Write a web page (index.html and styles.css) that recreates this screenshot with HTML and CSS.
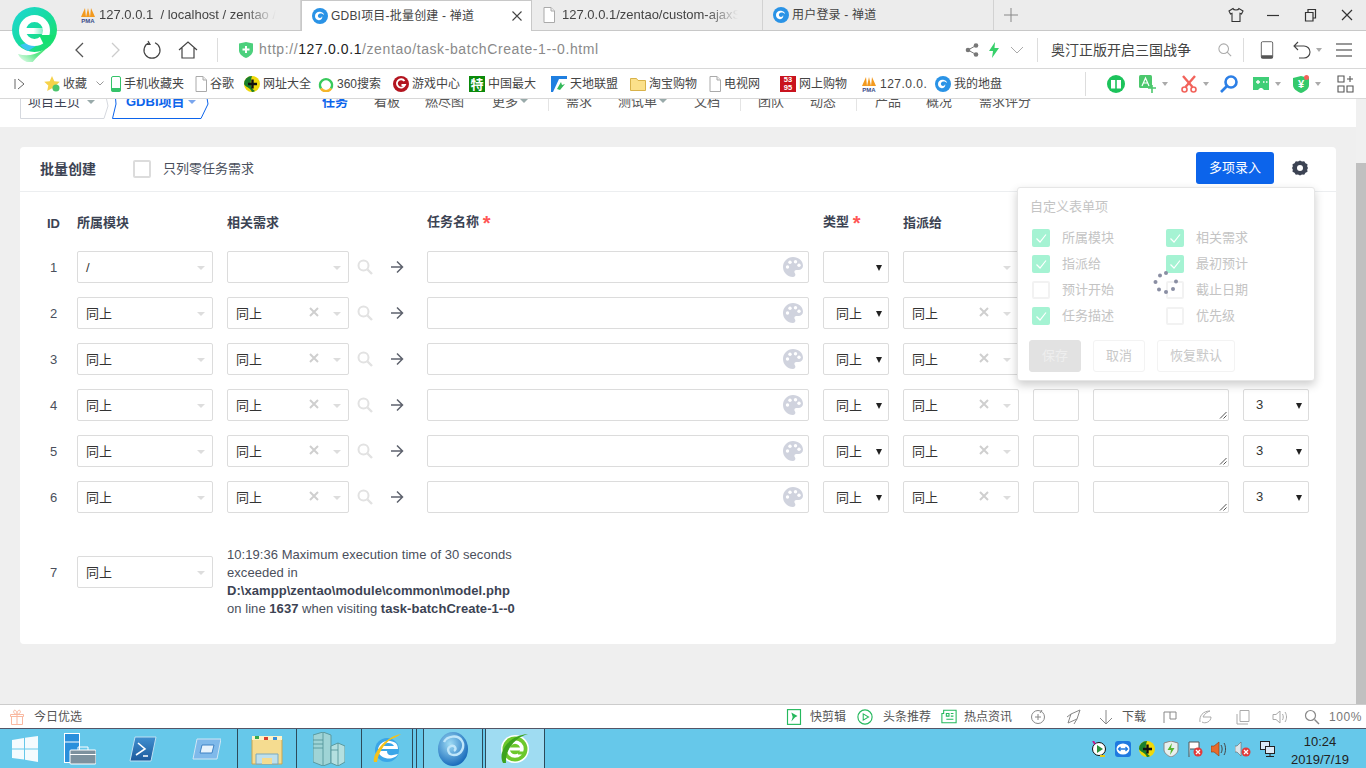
FILE: index.html
```html
<!DOCTYPE html>
<html lang="zh-CN">
<head>
<meta charset="utf-8">
<title>GDBI项目-批量创建 - 禅道</title>
<link rel="stylesheet" href="styles.css">
</head>
<body>
<svg class="defs" width="0" height="0" aria-hidden="true">
  <defs>
    <linearGradient id="gLogo" x1="0" y1="0" x2="1" y2="1"><stop offset="0" stop-color="#1fd6d8"/><stop offset=".5" stop-color="#16dca0"/><stop offset="1" stop-color="#1fe05a"/></linearGradient>
    <linearGradient id="gTail" x1="1" y1="0" x2="0" y2="1"><stop offset="0" stop-color="#1fe05a"/><stop offset=".6" stop-color="#5fe88a"/><stop offset="1" stop-color="#5fe88a" stop-opacity="0"/></linearGradient>
    <linearGradient id="gBar" x1="0" y1="0" x2="1" y2="0"><stop offset="0" stop-color="#fff"/><stop offset=".35" stop-color="#fff"/><stop offset="1" stop-color="#fff" stop-opacity="0"/></linearGradient>
    <radialGradient id="gOrb" cx=".4" cy=".35" r=".7"><stop offset="0" stop-color="#9fdcf5"/><stop offset="1" stop-color="#1165b8"/></radialGradient>
    <linearGradient id="gPs" x1="0" y1="0" x2="0" y2="1"><stop offset="0" stop-color="#3f8fd0"/><stop offset="1" stop-color="#1d5a9c"/></linearGradient>
    <symbol id="swirl" viewBox="0 0 16 16"><circle cx="8" cy="8" r="8" fill="#2a93e6"/><path d="M3 8c0-3 3-5 6-4 2 .6 3 2 3 3-1-1-3-2-5-1-2 1-1 4 1 4 1 0 2-1 2-2 1 2-1 5-4 4-2-.5-3-2-3-4z" fill="#fff"/></symbol>
    <symbol id="pma" viewBox="0 0 16 16"><path d="M1 10 5 1l1 9zM6 10l2-9 2 9zM10 10 11 1l4 9z" fill="#f39a1f"/><text x="8" y="15.5" text-anchor="middle" class="pmat">PMA</text></symbol>
    <symbol id="doc" viewBox="0 0 12 16"><path d="M1 .5h7l3.500 3.500v11.500h-10.500z" fill="#fff" stroke="#aaa"/><path d="M8 .5v3.500h3.500" fill="#eee" stroke="#aaa"/></symbol>
    <symbol id="palette" viewBox="0 0 20 20"><path d="M10 0C4.500 0 0 4.500 0 10s4.500 10 10 10c1.500 0 2.400-1 2.400-2.200 0-1.400-1-1.700-1-2.900 0-1 .8-1.800 1.800-1.800h2.300c2.500 0 4.500-2 4.500-4.300C20 3.700 15.500 0 10 0z" fill="#d0d3de"/><circle cx="4.500" cy="10" r="1.700" fill="#fff"/><circle cx="7" cy="5.300" r="1.700" fill="#fff"/><circle cx="12.500" cy="4.700" r="1.700" fill="#fff"/><circle cx="16" cy="8.300" r="1.700" fill="#fff"/></symbol>
    <symbol id="mag" viewBox="0 0 16 16"><circle cx="6.500" cy="6.500" r="5" fill="none" stroke="currentColor" stroke-width="2"/><path d="M10.500 10.500 15 15" stroke="currentColor" stroke-width="2.400"/></symbol>
    <symbol id="arrow" viewBox="0 0 14 14"><path d="M1 7h11.500M7 1.500 12.500 7 7 12.500" fill="none" stroke="#5e626d" stroke-width="1.500"/></symbol>
    <symbol id="check" viewBox="0 0 18 18"><path d="M4.500 9.500 8 13l6-7.500" fill="none" stroke="#fff" stroke-width="1.200"/></symbol>
    <symbol id="xmark" viewBox="0 0 10 10"><path d="M1 1l8 8M9 1l-8 8" stroke="#cfcfcf" stroke-width="2"/></symbol>
  </defs>
</svg>

<svg class="logo" viewBox="0 0 45 55" width="45" height="55" aria-hidden="true">
  <path d="M42 30C38 42 28 45 20 56 14 56 8 52 6 47c14 4 28-2 36-17z" fill="url(#gTail)"/>
  <circle cx="22.500" cy="22.500" r="22.500" fill="url(#gLogo)"/>
  <path d="M8 38a22 22 0 0 0 8 6l8-5-10-3z" fill="#3dc6f2"/>
  <circle cx="22.500" cy="23.500" r="12" fill="none" stroke="#fff" stroke-width="7"/>
  <rect x="12" y="21" width="27" height="6" fill="url(#gBar)"/>
  <path d="M27 28h15v5l-10 5z" fill="#14df72"/>
</svg>

<header class="tabbar">
  <div class="tab">
    <svg class="ic16"><use href="#pma"/></svg><span class="tab-title fade">127.0.0.1 &nbsp;/ localhost / zentao /</span>
  </div>
  <div class="tab tab-on">
    <svg class="ic16"><use href="#swirl"/></svg><span class="tab-title cjk">GDBI项目-批量创建 - 禅道</span>
    <svg class="tab-x" viewBox="0 0 10 10" width="10" height="10"><path d="M.5.500l9 9M9.500.500l-9 9" stroke="#444" stroke-width="1.100"/></svg>
  </div>
  <div class="tab">
    <svg class="ic-doc"><use href="#doc"/></svg><span class="tab-title fade">127.0.0.1/zentao/custom-ajaxSave</span>
  </div>
  <div class="tab">
    <svg class="ic16"><use href="#swirl"/></svg><span class="tab-title cjk">用户登录 - 禅道</span>
  </div>
  <svg class="tab-plus" viewBox="0 0 14 14" width="14" height="14"><path d="M7 0v14M0 7h14" stroke="#888"/></svg>
  <div class="winctl">
    <svg viewBox="0 0 16 16" width="16" height="16"><path d="M5 1.500 1 4l1.500 3L4 6.300V14.500h8V6.300L13.500 7 15 4l-4-2.500c-.5 2-5.500 2-6 0z" fill="none" stroke="#333" stroke-width="1.100"/></svg>
    <svg viewBox="0 0 16 16" width="16" height="16"><path d="M2 8.500h12" stroke="#333" stroke-width="1.200"/></svg>
    <svg viewBox="0 0 16 16" width="16" height="16"><path d="M3.500 5.500h7.500v8.500h-7.500zM6 5.500V2.500h7.500v8.500H11" fill="none" stroke="#333" stroke-width="1.200"/></svg>
    <svg viewBox="0 0 16 16" width="16" height="16"><path d="M3 3l10 10M13 3L3 13" stroke="#333" stroke-width="1.200"/></svg>
  </div>
</header>

<nav class="toolbar">
  <svg class="tool" viewBox="0 0 16 16" width="16" height="16"><path d="M11 1 4 8l7 7" fill="none" stroke="#555" stroke-width="1.300"/></svg>
  <svg class="tool" viewBox="0 0 16 16" width="16" height="16"><path d="M5 1l7 7-7 7" fill="none" stroke="#ccc" stroke-width="1.300"/></svg>
  <svg class="tool" viewBox="0 0 20 20" width="20" height="20"><path d="M7 2.800A8 8 0 1 0 13 2.800M6 1l2 3.500H3.500" fill="none" stroke="#444" stroke-width="1.200"/></svg>
  <svg class="tool" viewBox="0 0 20 20" width="20" height="20"><path d="M1 10 10 2l9 8M4 8v10h12V8" fill="none" stroke="#444" stroke-width="1.200"/></svg>
  <i class="vline"></i>
  <svg class="tool" viewBox="0 0 14 16" width="14" height="16"><path d="M0 1.500 7 0l7 1.500v7C14 12 10 15 7 16 4 15 0 12 0 8.500z" fill="#4cd07d"/><path d="M7 4v7M3.500 7.500h7" stroke="#fff" stroke-width="2"/></svg>
  <div class="url">http://<b>127.0.0.1</b>/zentao/task-batchCreate-1--0.html</div>
  <svg class="tool" viewBox="0 0 14 14" width="14" height="14"><circle cx="11" cy="2.500" r="2.300" fill="#777"/><circle cx="3" cy="7" r="2.300" fill="#777"/><circle cx="11" cy="11.500" r="2.300" fill="#777"/><path d="M11 2.500 3 7l8 4.500" fill="none" stroke="#777"/></svg>
  <svg class="tool" viewBox="0 0 10 16" width="10" height="16"><path d="M6 0 0 9h4l-1 7 7-10H5.500z" fill="#37d06a"/></svg>
  <svg class="tool" viewBox="0 0 14 8" width="14" height="8"><path d="M1 1l6 6 6-6" fill="none" stroke="#aaa"/></svg>
  <i class="vline"></i>
  <div class="searchtext">奥汀正版开启三国战争</div>
  <svg class="tool mag-grey" viewBox="0 0 16 16" width="14" height="14"><circle cx="6.500" cy="6.500" r="5.500" fill="none" stroke="#aaa" stroke-width="1.200"/><path d="M10.500 10.500 15 15" stroke="#aaa" stroke-width="1.200"/></svg>
  <i class="vline"></i>
  <svg class="tool" viewBox="0 0 16 20" width="14" height="20"><rect x="1.500" y=".5" width="13" height="19" rx="1.500" fill="none" stroke="#555"/><rect x="1.500" y="16" width="13" height="3.500" fill="#555"/></svg>
  <svg class="tool" viewBox="0 0 18 18" width="18" height="18"><path d="M5 1 1 5l4 4M1 5h10a5.500 5.500 0 0 1 0 12H6" fill="none" stroke="#444" stroke-width="1.100"/></svg>
  <svg class="tool" viewBox="0 0 6 4" width="6" height="4"><path d="M0 0h6L3 4z" fill="#aaa"/></svg>
  <svg class="tool" viewBox="0 0 16 14" width="16" height="14"><path d="M0 1h16M0 7h16M0 13h16" stroke="#333" stroke-width="1.200"/></svg>
</nav>

<nav class="bookmarks">
  <svg class="tog" viewBox="0 0 12 12" width="12" height="12"><path d="M1 1v10M4 1l6 5-6 5" fill="none" stroke="#666"/></svg>
  <a class="bm"><svg class="ic16" viewBox="0 0 16 16"><path d="M8 0l2.300 5.200 5.500.6-4.100 3.800 1.100 5.500L8 12.300 3.200 15l1.100-5.500L.2 5.800l5.500-.6z" fill="#f6d24a"/><circle cx="12" cy="12" r="3.500" fill="#4cc56d"/></svg><span>收藏</span><svg class="chev" viewBox="0 0 8 5" width="8" height="5"><path d="M.5.500 4 4 7.500.500" fill="none" stroke="#999"/></svg></a>
  <a class="bm"><svg class="ic-phone" viewBox="0 0 10 16"><rect x=".5" y=".5" width="9" height="15" rx="1.500" fill="#fff" stroke="#35c36a"/><rect x=".5" y="12" width="9" height="3.500" fill="#35c36a"/></svg><span>手机收藏夹</span></a>
  <a class="bm"><svg class="ic-doc"><use href="#doc"/></svg><span>谷歌</span></a>
  <a class="bm"><svg class="ic16" viewBox="0 0 16 16"><circle cx="8" cy="8" r="8" fill="#f0d90a"/><path d="M8 0a8 8 0 0 0-8 8c2 4 5 2 8 8a8 8 0 0 0 3-1C6 12 6 6 8 0z" fill="#1a7f2c"/><path d="M8.500 3.500v9M4 8h9" stroke="#111" stroke-width="2.400"/></svg><span>网址大全</span></a>
  <a class="bm"><svg class="ic16" viewBox="0 0 16 16"><path d="M13 12.500A6 6 0 1 0 3 12.500" fill="none" stroke="#38c95b" stroke-width="2.500"/><path d="M3 12.500a6 6 0 0 0 10 0" fill="none" stroke="#f5b52a" stroke-width="2.500"/></svg><span>360搜索</span></a>
  <a class="bm"><svg class="ic16" viewBox="0 0 16 16"><circle cx="8" cy="8" r="8" fill="#b3141f"/><path d="M11.500 5A4.200 4.200 0 1 0 12 9H8.500" fill="none" stroke="#fff" stroke-width="1.800"/></svg><span>游戏中心</span></a>
  <a class="bm"><b class="ic-te">特</b><span>中国最大</span></a>
  <a class="bm"><svg class="ic16" viewBox="0 0 16 16"><rect width="16" height="16" fill="#1f7fe0"/><path d="M8 3h8v13H2z" fill="#fff"/><path d="M6 13l4-7 1 3 3-1-5 6z" fill="#35b85a"/></svg><span>天地联盟</span></a>
  <a class="bm"><svg class="ic16" viewBox="0 0 16 16"><path d="M.5 2.500h6l1.500 2h7.500v10H.5z" fill="#fbe08a" stroke="#d8b24a"/></svg><span>淘宝购物</span></a>
  <a class="bm"><svg class="ic-doc"><use href="#doc"/></svg><span>电视网</span></a>
  <a class="bm"><b class="ic-53">53<br>95</b><span>网上购物</span></a>
  <a class="bm"><svg class="ic16"><use href="#pma"/></svg><span class="lat">127.0.0.</span></a>
  <a class="bm"><svg class="ic16"><use href="#swirl"/></svg><span>我的地盘</span></a>
  <i class="vline"></i>
  <svg class="ic18" viewBox="0 0 18 18"><circle cx="9" cy="9" r="9" fill="#1cc35b"/><path d="M4 5h4.200v8.500H4zM9.800 5H14v8.500H9.800z" fill="#fff"/></svg>
  <div class="ext"><svg class="ic18" viewBox="0 0 18 18"><rect width="13" height="13" rx="1.500" fill="#4cc86d"/><path d="M3 11 6.500 3 10 11M4.500 8h4" fill="none" stroke="#fff" stroke-width="1.200"/><path d="M9 13h8M13 10v8" stroke="#4cc86d" stroke-width="1.600"/></svg><i class="mini"></i></div>
  <div class="ext"><svg class="ic18" viewBox="0 0 18 18"><path d="M3 1l9.500 11M15 1 5.500 12" stroke="#f2635b" stroke-width="2.400"/><circle cx="4.500" cy="14.500" r="2.500" fill="none" stroke="#f2635b" stroke-width="1.600"/><circle cx="13.500" cy="14.500" r="2.500" fill="none" stroke="#f2635b" stroke-width="1.600"/></svg><i class="mini"></i></div>
  <svg class="ic18" viewBox="0 0 18 18"><circle cx="11" cy="7" r="5.500" fill="none" stroke="#2c7fe6" stroke-width="2.600"/><path d="M7 11l-6 6" stroke="#2c7fe6" stroke-width="2.600"/></svg>
  <div class="ext"><svg class="ic18" viewBox="0 0 18 18"><path d="M1 2h16v13h-5l-2-2H8l-2 2H1z" fill="#3fce77"/><path d="M4 7h4M6 5v4M11 7h1.500M14 7h1.500" stroke="#fff" stroke-width="1.300"/></svg><i class="mini"></i></div>
  <div class="ext"><svg class="ic18" viewBox="0 0 18 18"><path d="M1 3l8-2 8 2v7c0 4-4 6.500-8 8-4-1.500-8-4-8-8z" fill="#33c96b"/><text x="9" y="13" text-anchor="middle" class="yen">¥</text><circle cx="14.500" cy="2.500" r="2.500" fill="#f2635b"/></svg><i class="mini"></i></div>
  <svg class="ic18" viewBox="0 0 16 18"><path d="M1 1h6v6H1zM1 11h6v6H1zM10 11h6v6h-6zM13 1v6M10 4h6" fill="none" stroke="#555" stroke-width="1.100"/></svg>
</nav>

<div class="main">
  <div class="page">
    <div class="pnav">
      <div class="crumb"><svg class="crumb-bd" viewBox="0 0 92 27" width="92" height="27"><path d="M.5 0V26.500H84L88 14 85 0" fill="none" stroke="#d5d8de"/></svg><span class="crumb-t">项目主页</span><i class="car"></i></div>
      <div class="crumb crumb-on"><svg class="crumb-bd" viewBox="0 0 98 27" width="98" height="27"><path d="M3 0 4 12 .5 26.500H89L96 12 94 0" fill="none" stroke="#0c64eb"/></svg><span class="crumb-t">GDBI项目</span><i class="car"></i></div>
      <a class="ni ni-on">任务</a><a class="ni">看板</a><a class="ni">燃尽图</a><a class="ni">更多<i class="car"></i></a>
      <i class="ndiv"></i>
      <a class="ni">需求</a><a class="ni">测试单<i class="car"></i></a><a class="ni">文档</a>
      <i class="ndiv"></i>
      <a class="ni">团队</a><a class="ni">动态</a>
      <i class="ndiv"></i>
      <a class="ni">产品</a><a class="ni">概况</a><a class="ni">需求评分</a>
    </div>

    <section class="card">
      <div class="card-head">
        <strong class="ch-title">批量创建</strong>
        <span class="cb"></span>
        <span class="ch-label">只列零任务需求</span>
        <span class="primary">多项录入</span>
        <svg class="gear" viewBox="0 0 16 16" width="16" height="16"><path d="M8 .5l2 1 2.200-.3 1.300 2 2 1-.3 2.300.8 1.500-.8 1.500.3 2.300-2 1-1.300 2-2.200-.3-2 1-2-1-2.200.3-1.300-2-2-1 .3-2.300L0 8l.8-1.500L.5 4.200l2-1 1.300-2 2.200.3z" fill="#3c4353"/><circle cx="8" cy="8" r="3" fill="#fff"/></svg>
      </div>

      <div class="tbl">
        <div class="row row-h">
          <span class="num">ID</span><span>所属模块</span><span>相关需求</span>
          <span class="up">任务名称 <em>*</em></span><span class="up">类型 <em>*</em></span><span>指派给</span>
        </div>

        <div class="row"><span class="num">1</span><div class="sel">/<i class="dn"></i></div><div class="story"><div class="sel sel-s"><i class="dn"></i></div><svg class="ic-m"><use href="#mag"/></svg><svg class="ic-a"><use href="#arrow"/></svg></div><div class="inp"><svg class="ic-p"><use href="#palette"/></svg></div><div class="nat"><i class="blk"></i></div><div class="sel"><i class="dn"></i></div><div class="box"></div><div class="area"></div><div class="nat"><i class="blk"></i></div></div>

        <div class="row"><span class="num">2</span><div class="sel">同上<i class="dn"></i></div><div class="story"><div class="sel sel-s">同上<svg class="x"><use href="#xmark"/></svg><i class="dn"></i></div><svg class="ic-m"><use href="#mag"/></svg><svg class="ic-a"><use href="#arrow"/></svg></div><div class="inp"><svg class="ic-p"><use href="#palette"/></svg></div><div class="nat">同上<i class="blk"></i></div><div class="sel">同上<svg class="x"><use href="#xmark"/></svg><i class="dn"></i></div><div class="box"></div><div class="area"></div><div class="nat nat-n">3<i class="blk"></i></div></div>

        <div class="row"><span class="num">3</span><div class="sel">同上<i class="dn"></i></div><div class="story"><div class="sel sel-s">同上<svg class="x"><use href="#xmark"/></svg><i class="dn"></i></div><svg class="ic-m"><use href="#mag"/></svg><svg class="ic-a"><use href="#arrow"/></svg></div><div class="inp"><svg class="ic-p"><use href="#palette"/></svg></div><div class="nat">同上<i class="blk"></i></div><div class="sel">同上<svg class="x"><use href="#xmark"/></svg><i class="dn"></i></div><div class="box"></div><div class="area"></div><div class="nat nat-n">3<i class="blk"></i></div></div>

        <div class="row"><span class="num">4</span><div class="sel">同上<i class="dn"></i></div><div class="story"><div class="sel sel-s">同上<svg class="x"><use href="#xmark"/></svg><i class="dn"></i></div><svg class="ic-m"><use href="#mag"/></svg><svg class="ic-a"><use href="#arrow"/></svg></div><div class="inp"><svg class="ic-p"><use href="#palette"/></svg></div><div class="nat">同上<i class="blk"></i></div><div class="sel">同上<svg class="x"><use href="#xmark"/></svg><i class="dn"></i></div><div class="box"></div><div class="area"><svg class="grip" viewBox="0 0 8 8" width="8" height="8"><path d="M7.500 1 1 7.500M7.500 4.500l-3 3" stroke="#555"/></svg></div><div class="nat nat-n">3<i class="blk"></i></div></div>

        <div class="row"><span class="num">5</span><div class="sel">同上<i class="dn"></i></div><div class="story"><div class="sel sel-s">同上<svg class="x"><use href="#xmark"/></svg><i class="dn"></i></div><svg class="ic-m"><use href="#mag"/></svg><svg class="ic-a"><use href="#arrow"/></svg></div><div class="inp"><svg class="ic-p"><use href="#palette"/></svg></div><div class="nat">同上<i class="blk"></i></div><div class="sel">同上<svg class="x"><use href="#xmark"/></svg><i class="dn"></i></div><div class="box"></div><div class="area"><svg class="grip" viewBox="0 0 8 8" width="8" height="8"><path d="M7.500 1 1 7.500M7.500 4.500l-3 3" stroke="#555"/></svg></div><div class="nat nat-n">3<i class="blk"></i></div></div>

        <div class="row"><span class="num">6</span><div class="sel">同上<i class="dn"></i></div><div class="story"><div class="sel sel-s">同上<svg class="x"><use href="#xmark"/></svg><i class="dn"></i></div><svg class="ic-m"><use href="#mag"/></svg><svg class="ic-a"><use href="#arrow"/></svg></div><div class="inp"><svg class="ic-p"><use href="#palette"/></svg></div><div class="nat">同上<i class="blk"></i></div><div class="sel">同上<svg class="x"><use href="#xmark"/></svg><i class="dn"></i></div><div class="box"></div><div class="area"><svg class="grip" viewBox="0 0 8 8" width="8" height="8"><path d="M7.500 1 1 7.500M7.500 4.500l-3 3" stroke="#555"/></svg></div><div class="nat nat-n">3<i class="blk"></i></div></div>

        <div class="row row-err">
          <span class="num num-e">7</span><div class="sel sel-e">同上<i class="dn"></i></div>
          <div class="err">10:19:36 Maximum execution time of 30 seconds exceeded in <b>D:\xampp\zentao\module\common\model.php</b><br>on line <b>1637</b> when visiting <b>task-batchCreate-1--0</b></div>
        </div>
      </div>

      <div class="pop">
        <div class="pop-h">自定义表单项</div>
        <div class="pop-g">
          <label class="pi"><span class="pb on"><svg><use href="#check"/></svg></span>所属模块</label>
          <label class="pi"><span class="pb on"><svg><use href="#check"/></svg></span>相关需求</label>
          <label class="pi"><span class="pb on"><svg><use href="#check"/></svg></span>指派给</label>
          <label class="pi"><span class="pb on"><svg><use href="#check"/></svg></span>最初预计</label>
          <label class="pi"><span class="pb"></span>预计开始</label>
          <label class="pi"><span class="pb"></span>截止日期</label>
          <label class="pi"><span class="pb on"><svg><use href="#check"/></svg></span>任务描述</label>
          <label class="pi"><span class="pb"></span>优先级</label>
        </div>
        <div class="pop-b"><span class="pbtn pbtn-s">保存</span><span class="pbtn">取消</span><span class="pbtn">恢复默认</span></div>
        <svg class="spin" viewBox="0 0 26 26" width="26" height="26"><g fill="#8a8ea3"><circle cx="7" cy="4.500" r="2"/><circle cx="13" cy="2" r="2"/><circle cx="2.500" cy="11" r="2"/><circle cx="6" cy="18.500" r="2"/><circle cx="13" cy="21" r="2"/><circle cx="20" cy="18" r="2"/><circle cx="23" cy="10.500" r="2"/></g></svg>
      </div>
    </section>
  </div>
  <div class="sbar"><div class="thumb"></div></div>
</div>

<footer class="status">
  <svg class="ic16" viewBox="0 0 16 16"><path d="M1.500 5.500h13v2h-13zM2.500 7.500v8h11v-8M8 5.500v10M8 5.500C5 5 4 3 5 1.500c1.500-1 3 1 3 4 0-3 1.500-5 3-4 1 1.500 0 3.500-3 4" fill="none" stroke="#f9b8a0"/></svg>
  <span>今日优选</span>
  <svg class="ic-st" viewBox="0 0 16 18"><rect x=".7" y=".7" width="14.600" height="16.600" fill="none" stroke="#25b85d" stroke-width="1.300"/><path d="M5 4l7 4-3 1.500L5 14l1.500-5z" fill="#25b85d"/></svg>
  <span>快剪辑</span>
  <svg class="ic-st" viewBox="0 0 18 18"><circle cx="9" cy="9" r="8" fill="none" stroke="#25b85d" stroke-width="1.300"/><path d="M7 5.500 13 9l-6 3.500z" fill="none" stroke="#25b85d" stroke-width="1.200"/></svg>
  <span>头条推荐</span>
  <svg class="ic-st" viewBox="0 0 18 18"><path d="M3 1.500h14v14H1V5h2zM6 5h3v3H6zM11 5h3M11 8h3M6 11.500h8" fill="none" stroke="#25b85d" stroke-width="1.200"/></svg>
  <span>热点资讯</span>
  <svg class="ic-st" viewBox="0 0 16 16"><circle cx="8" cy="8" r="6.500" fill="none" stroke="#888"/><path d="M8 5v6M5 8h6M12 1l-2 3" stroke="#888"/></svg>
  <svg class="ic-st" viewBox="0 0 16 16"><path d="M14 1 5 5 2 14l9-4zM1 8l4-3M8 15l3-5" fill="none" stroke="#888"/></svg>
  <svg class="ic-st" viewBox="0 0 16 16"><path d="M8 1v14M2 9l6 6 6-6" fill="none" stroke="#888"/></svg>
  <span>下载</span>
  <svg class="ic-st" viewBox="0 0 16 16"><path d="M2 14V3h12v7H8V3" fill="none" stroke="#888"/></svg>
  <svg class="ic-st" viewBox="0 0 16 16"><path d="M3 13C2 7 6 2 13 2c-2 .5-6 3-7 6h8c0 5-6 7-9 5" fill="none" stroke="#aaa"/></svg>
  <svg class="ic-st" viewBox="0 0 16 16"><path d="M5 1.500h9v11H5zM2 5v10h11" fill="none" stroke="#aaa"/></svg>
  <svg class="ic-st" viewBox="0 0 16 16"><path d="M1 5.500h3L8 2v12L4 10.500H1zM10.500 5c1 2 1 4 0 6M13 3c2 3 2 7 0 10" fill="none" stroke="#aaa"/></svg>
  <svg class="ic-st" viewBox="0 0 16 16"><circle cx="6.500" cy="6.500" r="5" fill="none" stroke="#888" stroke-width="1.200"/><path d="M10.500 10.500 15 15" stroke="#888" stroke-width="1.400"/></svg>
  <span class="lat">100%</span>
</footer>

<footer class="taskbar">
  <div class="tb tb-win"><svg viewBox="0 0 26 26" width="26" height="26"><path d="M0 4l12-2v10.500H0zM13 1.700 26 0v12.500H13zM0 13.500h12v10L0 22zM13 13.500h13V26l-13-2.200z" fill="#f4fbfe"/></svg></div>
  <div class="tb tb-a"><svg viewBox="0 0 32 32" width="32" height="32"><rect x=".5" y=".5" width="15" height="29" fill="#2a8fdc" stroke="#fff"/><path d="M0 9h16" stroke="#fff"/><rect x="6" y="17" width="26" height="14" rx="1" fill="#7d919e" stroke="#fff"/><path d="M14 17v-3h10v3M6 21.500h26" fill="none" stroke="#fff"/></svg></div>
  <div class="tb tb-b"><svg viewBox="0 0 28 26" width="28" height="26"><path d="M6 1h21l-5 24H1z" fill="url(#gPs)" stroke="#bfe0f2"/><path d="M9 7l7 6-9 6M14 20h5" fill="none" stroke="#fff" stroke-width="1.600"/></svg></div>
  <div class="tb tb-c"><svg viewBox="0 0 30 24" width="30" height="24"><path d="M6 2h24l-4 20H2z" fill="#7fb9ea" stroke="#cfe6f5"/><path d="M11 8h12l-2 8H9z" fill="#e7f3fc" stroke="#3f82c4"/></svg></div>
  <div class="tb tile tile-f"><svg viewBox="0 0 32 32" width="32" height="32"><path d="M1 6h30v25H1z" fill="#f5dc90" stroke="#c9a650"/><path d="M1 3h30v4H1z" fill="#fff3c6"/><rect x="4" y="3" width="4" height="3" fill="#36a84a"/><rect x="13" y="4" width="4" height="3" fill="#d8402f"/><rect x="22" y="4" width="4" height="3" fill="#3a8fd8"/><path d="M5 21h22v10H5z" fill="#bfe0ec" stroke="#7aa9bd"/><path d="M11 31v-6h10v6z" fill="#f5dc90"/></svg></div>
  <div class="tb tile tile-g"><svg viewBox="0 0 32 34" width="32" height="34"><path d="M0 3 10 0l8 3v28l-8 3-10-4z" fill="#9fd4d6" stroke="#5a9aa0"/><path d="M18 14l7-3 7 3v16l-7 4-7-3z" fill="#b4e0e0" stroke="#5a9aa0"/><path d="M0 8h10M0 12h10M0 16h10M10 0v34M25 11v23M18 18h7" stroke="#4d8f96" stroke-width=".8"/></svg></div>
  <div class="tb tile tile-h"><svg viewBox="0 0 30 32" width="30" height="32"><circle cx="15" cy="17" r="12" fill="#3aa6e8"/><path d="M6 16h20c0-6-4-8-10-8-5 0-9 3-10 8zM10 13c1-2 3-3 6-3 3 0 5 1 6 3z" fill="#fff"/><path d="M6 18h9c0 4 3 5 6 4l5-1c-3 6-17 7-20-3z" fill="#fff"/><path d="M2 29C0 22 12 4 29 1c-4 3-8 4-11 6-6 4-12 14-13 22z" fill="#f4c21b"/></svg></div>
  <div class="tb tile tile-n"></div>
  <div class="tb tile tile-n2"></div>
  <div class="tb tile tile-i"><svg viewBox="0 0 30 34" width="30" height="34"><ellipse cx="15" cy="17" rx="15" ry="17" fill="url(#gOrb)"/><path d="M6 10c3-6 14-8 18-1 3 5 0 14-8 14-6 0-8-7-3-9 4-1 6 3 3 5" fill="none" stroke="#bfe6fa" stroke-width="2.400"/></svg></div>
  <div class="tb tile tile-on"><svg viewBox="0 0 30 32" width="30" height="32"><circle cx="15" cy="16" r="14" fill="#fff"/><circle cx="15" cy="16" r="12.500" fill="#6cc82c"/><circle cx="15" cy="16" r="7" fill="none" stroke="#fff" stroke-width="3.500"/><rect x="7" y="14.500" width="16" height="3" fill="#fff"/><rect x="18" y="18.500" width="8" height="3" fill="#6cc82c"/><path d="M3 30C-3 18 10 2 28 1 16 4 5 16 6 30z" fill="#3da31e"/></svg></div>
  <div class="tray">
    <svg class="ti" viewBox="0 0 16 16"><circle cx="8" cy="8" r="6.500" fill="#fff" stroke="#111"/><path d="M6 4l6 4-6 4z" fill="#2a8f3a"/><path d="M2 0l2 3" stroke="#c2188f" stroke-width="2"/><path d="M9 15h5" stroke="#e8c916" stroke-width="2"/></svg>
    <svg class="ti" viewBox="0 0 16 16"><rect width="16" height="16" rx="3" fill="#1f7ae0"/><ellipse cx="8" cy="8" rx="6.500" ry="5.500" fill="#fff"/><path d="M3.500 8h9M5.500 6 3.500 8l2 2M10.500 6l2 2-2 2" fill="none" stroke="#1f7ae0" stroke-width="1.300"/></svg>
    <svg class="ti" viewBox="0 0 16 16"><circle cx="8" cy="8" r="8" fill="#f0d90a"/><path d="M8 0a8 8 0 0 0-8 8c2 4 5 2 8 8a8 8 0 0 0 3-1C6 12 6 6 8 0z" fill="#1a7f2c"/><path d="M8.500 3.500v9M4 8h9" stroke="#111" stroke-width="2.400"/></svg>
    <svg class="ti" viewBox="0 0 16 16"><path d="M1 2l7-2 7 2v7c0 3-4 6-7 7-3-1-7-4-7-7z" fill="#e8f0ee" stroke="#888"/><path d="M9 2 4.500 9H8l-1 5 4.500-7H8z" fill="#57b530"/></svg>
    <svg class="ti" viewBox="0 0 16 16"><path d="M2 16V1h10v7H3" fill="#fff" stroke="#555"/><circle cx="11" cy="11" r="4.500" fill="#e23b3b"/><path d="M9 9l4 4M13 9l-4 4" stroke="#fff" stroke-width="1.300"/></svg>
    <svg class="ti" viewBox="0 0 16 16"><path d="M0 5h3l5-4v14l-5-4H0z" fill="#e86b2b" stroke="#8a3a10" stroke-width=".6"/><path d="M10 4c1.500 2 1.500 6 0 8M13 2c2 3 2 9 0 12" fill="none" stroke="#444"/></svg>
    <svg class="ti" viewBox="0 0 16 16"><path d="M0 5h2l4-4v14l-4-4H0z" fill="#dfe5ea" stroke="#666" stroke-width=".6"/><circle cx="11" cy="11" r="4.500" fill="#e23b3b"/><path d="M9 9l4 4M13 9l-4 4" stroke="#fff" stroke-width="1.300"/></svg>
    <svg class="ti" viewBox="0 0 16 16"><rect x="1.500" y=".5" width="9" height="8" fill="#dbe9f5" stroke="#222"/><rect x="6.500" y="5.500" width="9" height="7" fill="#dbe9f5" stroke="#222"/><path d="M11 12.500v3M7 15.500h8" stroke="#222"/></svg>
    <div class="clock"><span>10:24</span><span>2019/7/19</span></div>
  </div>
</footer>
</body>
</html>
```

FILE: styles.css
```css
* { box-sizing: border-box; }
html, body { margin: 0; height: 768px; overflow: hidden; }
body {
  display: flex; flex-direction: column; position: relative;
  font: 13px/18px "Liberation Sans", "Noto Sans CJK SC", sans-serif; color: #3c4353;
  background: #fff;
}
i { font-style: normal; display: block; }
a { display: block; }
.defs { position: absolute; }
.pmat { font: bold 6px "Liberation Sans", sans-serif; fill: #3a4a8a; }
.yen { font: bold 11px "Liberation Sans", sans-serif; fill: #fff; }
.logo { position: absolute; left: 12px; top: 7px; z-index: 5; }
.ic16 { width: 16px; height: 16px; flex: none; display: block; }
.ic18 { width: 18px; height: 18px; flex: none; display: block; }
.ic-doc { width: 12px; height: 16px; flex: none; display: block; margin-left: 1px; }
.ic-phone { width: 10px; height: 16px; flex: none; display: block; }
.vline { width: 1px; height: 24px; background: #ddd; }

/* tabs */
.tabbar { flex: 0 0 31px; min-height: 0; height: 31px; display: flex; padding-left: 70px; background: #ececec; border-bottom: 1px solid #c8c8c8; }
.tab { flex: 0 0 231px; position: relative; display: flex; align-items: center; gap: 3px; padding-left: 10px; border-right: 1px solid #d2d2d2; font-size: 13px; color: #444; overflow: hidden; white-space: nowrap; height: 30px; }
.tab .ic-doc { margin-right: 4px; }
.tab-on { background: #fff; height: 31px; padding-bottom: 1px; border: 1px solid #c8c8c8; border-bottom: 0; color: #444; }
.tab-title { flex: 1; overflow: hidden; }
.cjk { font-size: 12px; letter-spacing: .2px; }
.fade { margin-right: 24px; -webkit-mask-image: linear-gradient(90deg, #000 82%, transparent 100%); mask-image: linear-gradient(90deg, #000 82%, transparent 100%); }
.tab-x { margin-right: 9px; }
.tab-plus { align-self: center; margin-left: 10px; }
.winctl { margin-left: auto; display: grid; grid-template-columns: 37px 37px 37px 16px; padding-right: 11px; align-items: center; }

/* toolbar */
.toolbar { flex: 0 0 38px; display: grid; align-items: center; padding-left: 72px; border-bottom: 1px solid #d8d8d8; background: #fff;
  grid-template-columns: 35px 35px 36px 39px 22px 20px 706px 24px 21px 27px 14px 165px 27px 17px 33px 23px 20px 16px; }
.tool { display: block; }
.mag-grey { margin-left: 2px; }
.url { font-size: 14px; color: #8a8a8a; letter-spacing: .6px; white-space: nowrap; margin-top: -1px; }
.url b { font-weight: 400; color: #222; }
.searchtext { color: #444; font-size: 14px; white-space: nowrap; }

/* bookmarks */
.bookmarks { flex: 0 0 30px; display: grid; align-items: center; padding-left: 14px; border-bottom: 1px solid #d8d8d8; background: #fff; font-size: 12px; color: #444;
  grid-template-columns: 30px 67px 83px 50px 74px 75px 76px 82px 79px 78px 72px 81px 74px 150px 22px 32px 41px 40px 32px 40px 44px 18px; }
.bm { display: flex; align-items: center; gap: 3px; white-space: nowrap; }
.bm .lat { letter-spacing: .5px; }
.chev { margin-left: 6px; }
.tog { display: block; }
.ic-te { width: 16px; height: 16px; background: #0b8a0b; color: #fff; font: bold 13px/16px "Noto Sans CJK SC", sans-serif; text-align: center; flex: none; }
.ic-53 { width: 16px; height: 16px; background: #c9131e; color: #fff; font: bold 7.500px/8px "Liberation Sans", sans-serif; text-align: center; flex: none; }
.ext { display: flex; align-items: center; gap: 5px; }
.mini { width: 0; height: 0; border: 3px solid transparent; border-top: 4px solid #aaa; border-bottom: 0; }

/* main */
.main { flex: 0 0 605px; display: flex; overflow: hidden; }
.page { flex: 1; background: #efefef; min-width: 0; }
.sbar { flex: 0 0 10px; background: #f0f0f0; padding-top: 64px; }
.thumb { height: 100%; background: #c0c0c0; }

.pnav { height: 28px; background: #fff; overflow: hidden; padding-left: 20px; display: grid; align-items: start;
  grid-template-columns: 92px 210px 52px 51px 67px 56px 18px 52px 76px 46px 18px 52px 46px 19px 51px 53px 80px; color: #555; }
.crumb { position: relative; height: 27px; margin-top: -7px; padding-left: 8px; line-height: 20px; display: flex; align-items: flex-start; gap: 7px; white-space: nowrap; color: #3c4353; }
.crumb-bd { position: absolute; left: 0; top: 0; }
.crumb-on { padding-left: 14px; color: #0c64eb; font-weight: 700; gap: 3px; }
.crumb .car { margin-top: 8px; }
.car { width: 0; height: 0; border: 4px solid transparent; border-top: 4px solid #9aa; border-bottom: 0; }
.crumb-on .car { border-top-color: #7aa6ee; }
.ni { margin-top: -7px; line-height: 20px; display: flex; gap: 2px; white-space: nowrap; }
.ni .car { margin-top: 7px; }
.ni-on { color: #0c64eb; font-weight: 700; }
.ndiv { width: 1px; height: 12px; background: #e4e4e4; }

.card { position: relative; margin: 20px 20px 0; height: 497px; background: #fff; border-radius: 4px; }
.card-head { height: 45px; display: flex; align-items: center; padding: 0 28px 0 20px; border-bottom: 1px solid #eceef0; }
.ch-title { font-size: 14px; color: #3c4353; margin-right: 37px; }
.cb { width: 18px; height: 18px; border: 2px solid #dcdcdc; border-radius: 2px; margin-right: 12px; }
.ch-label { color: #4a4f5c; }
.primary { margin: 0 0 2px auto; width: 78px; height: 32px; line-height: 32px; text-align: center; background: #0c64eb; color: #fff; border-radius: 3px; }
.gear { margin: 0 0 2px 18px; }

.tbl { padding: 13px 27px 27px 24px; display: flex; flex-direction: column; gap: 14px; }
.row { display: grid; grid-template-columns: 19px 136px 186px 382px 66px 116px 46px 136px 66px; column-gap: 14px; height: 32px; align-items: center; white-space: nowrap; }
.row-h { font-weight: 700; color: #3c4353; padding-top: 4px; }
.row-h .num { color: #3c4353; }
.up { margin-top: -3px; }
.up em { font: 700 20px/14px "Liberation Sans", sans-serif; color: #f55; vertical-align: -4px; }
.num { text-align: center; color: #4a4f5c; padding-top: 1px; }
.sel { position: relative; height: 32px; border: 1px solid #dcdcdc; border-radius: 2px; padding-left: 8px; line-height: 31px; color: #333; background: #fff; }
.dn { position: absolute; right: 7px; top: 14px; width: 0; height: 0; border: 4px solid transparent; border-top: 4px solid #ddd; border-bottom: 0; }
.x { position: absolute; right: 29px; top: 9px; width: 10px; height: 10px; }
.story { display: flex; align-items: center; }
.sel-s { width: 122px; flex: none; }
.ic-m { width: 16px; height: 16px; margin: 0 0 0 8px; color: #e2e2e2; flex: none; }
.ic-a { width: 14px; height: 14px; margin-left: 17px; flex: none; }
.inp { height: 32px; border: 1px solid #dcdcdc; border-radius: 2px; display: flex; align-items: center; justify-content: flex-end; padding-right: 5px; background: #fff; }
.ic-p { width: 20px; height: 20px; display: block; }
.nat { position: relative; height: 32px; border: 1px solid #dcdcdc; border-radius: 2px; padding-left: 12px; line-height: 32px; color: #333; background: #fff; }
.nat-n { line-height: 30px; }
.blk { position: absolute; right: 6px; top: 13px; width: 0; height: 0; border: 3.500px solid transparent; border-top: 6px solid #222; border-bottom: 0; }
.box { height: 32px; border: 1px solid #dcdcdc; border-radius: 2px; }
.area { position: relative; height: 32px; border: 1px solid #dcdcdc; border-radius: 2px; }
.grip { position: absolute; right: 1px; bottom: 1px; display: block; }
.row-err { margin-top: 18px; height: 72px; align-items: start; }
.num-e, .sel-e { margin-top: 11px; }
.num-e { line-height: 32px; }
.err { grid-column: 3 / 5; width: 300px; padding-top: 1px; white-space: normal; font-size: 13px; letter-spacing: .05px; line-height: 18px; color: #4a4f5c; }
.err b { color: #3c4353; }

/* popup */
.pop { position: absolute; left: 997px; top: 40px; width: 298px; height: 194px; background: #fff; border: 1px solid #e6e6e6; border-radius: 3px; box-shadow: 0 4px 10px rgba(0,0,0,.2); padding: 9px 11px; z-index: 3; }
.pop-h { line-height: 20px; color: #c4c4c4; padding-left: 1px; }
.pop-g { margin: 12px 0 15px 3px; display: grid; grid-template-columns: 134px 134px; row-gap: 8px; }
.pi { display: flex; align-items: center; gap: 12px; height: 18px; color: #c4c4c4; }
.pb { width: 18px; height: 18px; border: 2px solid #f2f2f2; border-radius: 2px; flex: none; }
.pb.on { background: #a5f3d3; border: 0; }
.pb svg { width: 18px; height: 18px; display: block; }
.pop-b { display: flex; gap: 12px; }
.pbtn { height: 32px; line-height: 30px; padding: 0 12px; border: 1px solid #f3f3f3; border-radius: 3px; color: #c8c8c8; text-align: center; min-width: 52px; }
.pbtn-s { background: #e2e2e2; border-color: #e2e2e2; color: #eee; }
.spin { position: absolute; left: 135px; top: 83px; }

/* status */
.status { flex: 0 0 24px; display: grid; align-items: center; padding-left: 9px; border-top: 1px solid #ccc; background: #fff; font-size: 12px; color: #555; white-space: nowrap;
  grid-template-columns: 25px 752px 24px 47px 26px 58px 23px 66px 36px 32px 24px 40px 35px 38px 37px 32px 25px 37px; }
.ic-st { width: 16px; height: 16px; display: block; }
.status .lat { letter-spacing: .6px; color: #777; }

/* taskbar */
.taskbar { flex: 0 0 40px; display: flex; background: #66c8ea; border-top: 1px solid #556; border-bottom: 1px solid #556; }
.tb { display: flex; align-items: center; justify-content: center; height: 100%; }
.tb-win { width: 50px; }
.tb-a { width: 60px; }
.tb-b { width: 65px; }
.tb-c { width: 62px; }
.tile { border-left: 1px solid #2d4a5a; }
.tile-f { width: 59px; }
.tile-g { width: 65px; }
.tile-h { width: 51px; }
.tile-n { width: 4px; }
.tile-n2 { width: 7px; }
.tile-i { width: 60px; border-right: 1px solid #2d4a5a; background: #7cd0ec; }
.tile-on { width: 60px; margin-left: 2px; border-right: 1px solid #2d4a5a; background: #9fdcf2; }
.tray { margin-left: auto; display: flex; align-items: center; gap: 8px; padding-right: 16px; }
.ti { width: 16px; height: 16px; display: block; }
.clock { width: 60px; margin-left: 7px; display: flex; flex-direction: column; align-items: center; font-size: 13px; line-height: 18px; color: #222; white-space: nowrap; padding-top: 4px; }
```
